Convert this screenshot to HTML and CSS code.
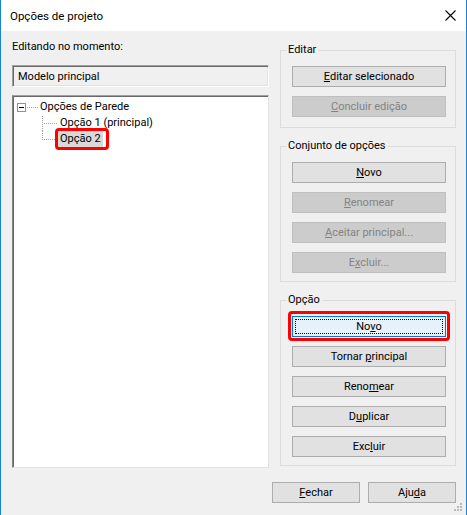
FILE: index.html
```html
<!DOCTYPE html>
<html lang="pt">
<head>
<meta charset="utf-8">
<title>Opções de projeto</title>
<link rel="stylesheet" href="styles.css">
</head>
<body>
<div class="window">
  <div class="titlebar">
    <span class="title">Opções de projeto</span>
    <svg class="close" width="11" height="11" viewBox="0 0 11 11"><path d="M0.5 0.5 L10.5 10.5 M10.5 0.5 L0.5 10.5" stroke="#000" stroke-width="1.1" fill="none"/></svg>
  </div>
  <div class="client">
    <div class="main">
      <div class="left">
        <div class="label">Editando no momento:</div>
        <div class="textbox">Modelo principal</div>
        <div class="tree">
          <div class="row">
            <svg class="gutter" width="24" height="16" viewBox="0 0 24 16">
              <rect x="3.5" y="4.5" width="8" height="8" fill="#fff" stroke="#919191"/>
              <path d="M5 8.5 H10" stroke="#000"/>
              <path d="M13 8.5 H24" stroke="#a0a0a0" stroke-dasharray="1 1"/>
            </svg>
            <span class="node">Opções de Parede</span>
          </div>
          <div class="row">
            <svg class="gutter" width="44" height="16" viewBox="0 0 44 16">
              <path d="M28.5 1 V16" stroke="#a0a0a0" stroke-dasharray="1 1"/>
              <path d="M30 8.5 H44" stroke="#a0a0a0" stroke-dasharray="1 1"/>
            </svg>
            <span class="node">Opção 1 (principal)</span>
          </div>
          <div class="row">
            <svg class="gutter" width="44" height="16" viewBox="0 0 44 16">
              <path d="M28.5 0 V9" stroke="#a0a0a0" stroke-dasharray="1 1"/>
              <path d="M30 8.5 H44" stroke="#a0a0a0" stroke-dasharray="1 1"/>
            </svg>
            <span class="node selected marked">Opção 2</span>
          </div>
        </div>
      </div>
      <div class="right">
        <fieldset class="group group-edit">
          <legend>Editar</legend>
          <button class="btn"><u>E</u>ditar selecionado</button>
          <button class="btn" disabled><u>C</u>oncluir edição</button>
        </fieldset>
        <fieldset class="group">
          <legend>Conjunto de opções</legend>
          <button class="btn"><u>N</u>ovo</button>
          <button class="btn" disabled><u>R</u>enomear</button>
          <button class="btn" disabled><u>A</u>ceitar principal...</button>
          <button class="btn" disabled>E<u>x</u>cluir...</button>
        </fieldset>
        <fieldset class="group">
          <legend>Opção</legend>
          <button class="btn focused marked">No<u>v</u>o</button>
          <button class="btn">Tornar <u>p</u>rincipal</button>
          <button class="btn">Reno<u>m</u>ear</button>
          <button class="btn">D<u>u</u>plicar</button>
          <button class="btn">Exc<u>l</u>uir</button>
        </fieldset>
      </div>
    </div>
    <div class="footer">
      <button class="btn small"><u>F</u>echar</button>
      <button class="btn small">Aju<u>d</u>a</button>
    </div>
  </div>
  <svg class="grip" width="9" height="9" viewBox="0 0 9 9" fill="#b9b9b9">
    <rect x="6" y="0" width="2" height="2"/>
    <rect x="3" y="3" width="2" height="2"/><rect x="6" y="3" width="2" height="2"/>
    <rect x="0" y="6" width="2" height="2"/><rect x="3" y="6" width="2" height="2"/><rect x="6" y="6" width="2" height="2"/>
  </svg>
</div>
</body>
</html>
```

FILE: styles.css
```css
* { box-sizing: border-box; }
html, body { margin: 0; padding: 0; }
body {
  font-family: Roboto, "Liberation Sans", sans-serif;
  font-size: 11px;
  color: #000;
  background: #f0f0f0;
}
.window {
  position: relative;
  width: 467px;
  height: 515px;
  border-left: 1px solid #1883d7;
  border-right: 1px solid #1883d7;
  background: #f0f0f0;
  display: flex;
  flex-direction: column;
}
.titlebar {
  height: 31px;
  background: #fff;
  display: flex;
  align-items: center;
  justify-content: space-between;
  padding: 0 10px 0 9px;
}
.title { font-size: 11.5px; line-height: 16px; }
.close { display: block; }
.client {
  flex: 1;
  padding: 8px 10px 0 11px;
  display: flex;
  flex-direction: column;
}
.main {
  display: flex;
  gap: 11px;
  height: 429px;
}
.left {
  width: 257px;
  display: flex;
  flex-direction: column;
}
.label { line-height: 16px; height: 16px; }
.textbox {
  margin-top: 10px;
  height: 22px;
  border: 1px solid;
  border-color: #a0a0a0 #fff #fff #a0a0a0;
  box-shadow: inset 1px 1px 0 #696969, inset -1px -1px 0 #e3e3e3;
  padding: 1px 5px 0;
  line-height: 20px;
  background: #f0f0f0;
}
.tree {
  margin-top: 8px;
  flex: 1;
  background: #fff;
  border: 1px solid;
  border-color: #a0a0a0 #e3e3e3 #e3e3e3 #828282;
  box-shadow: inset 1px 1px 0 #696969;
  padding: 3px 0 0 1px;
}
.row { display: flex; align-items: center; height: 16px; }
.gutter { display: block; flex: none; }
.node { line-height: 16px; padding: 0 2px; position: relative; white-space: nowrap; }
.selected { background: #d9d9d9; }
.marked::after {
  content: "";
  position: absolute;
  top: -3px; left: -3px; right: -6px; bottom: -3px;
  border: 3px solid #ff0000;
  border-radius: 4px;
  pointer-events: none;
}
.right {
  width: 176px;
  display: flex;
  flex-direction: column;
  gap: 10px;
  padding-top: 3px;
}
.group {
  margin: 0;
  border: 1px solid #dcdcdc;
  padding: 8px 9px 8px 11px;
  display: flex;
  flex-direction: column;
  gap: 9px;
  min-width: 0;
}
.group-edit { padding-bottom: 10px; }
.group legend {
  padding: 0 2px;
  margin-left: -6px;
  line-height: 16px;
}
.btn {
  font-family: inherit;
  font-size: 11px;
  font-weight: 400;
  color: #000;
  height: 21px;
  width: 154px;
  padding: 0;
  margin: 0;
  background: #e1e1e1;
  border: 1px solid #adadad;
  border-radius: 0;
  line-height: 19px;
  text-align: center;
  position: relative;
}
.btn:disabled {
  background: #cccccc;
  border-color: #bfbfbf;
  color: #838383;
}
.btn.focused {
  background: #e5f1fb;
  border-color: #0078d7;
  outline: 1px dotted #000;
  outline-offset: -4px;
}
.btn.marked::after {
  top: -6px; left: -5px; right: -5px; bottom: -5px;
}
.footer {
  margin-top: 14px;
  display: flex;
  justify-content: flex-end;
  gap: 8px;
}
.btn.small { width: 88px; }
.grip {
  position: absolute;
  right: 3px;
  bottom: 3px;
}
```
